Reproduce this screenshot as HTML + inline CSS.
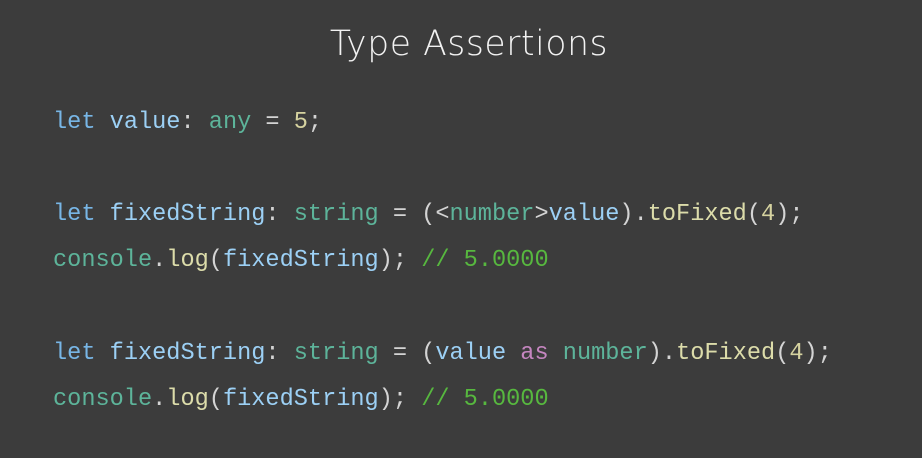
<!DOCTYPE html>
<html><head><style>
body{margin:0;width:922px;height:458px;background:#3c3c3c;overflow:hidden;position:relative}
h1{position:absolute;top:24px;left:0;width:938px;text-align:center;margin:0;font:200 34.5px "DejaVu Sans","Liberation Sans",sans-serif;color:#f2f2f2;letter-spacing:0.6px}
.l{position:absolute;left:53px;font:23.6px "Liberation Mono",monospace;color:#d4d4d4;white-space:pre;line-height:30px}
.k{color:#78b6e6}.v{color:#9cd0f5}.t{color:#5db49a}.n{color:#d6d3a0}.f{color:#dcdcaa}.c{color:#57b83f}.a{color:#c586c0}
</style></head><body>
<h1>Type Assertions</h1>
<div class="l" style="top:108px"><span class="k">let</span> <span class="v">value</span>: <span class="t">any</span> = <span class="n">5</span>;</div>
<div class="l" style="top:200px"><span class="k">let</span> <span class="v">fixedString</span>: <span class="t">string</span> = (&lt;<span class="t">number</span>&gt;<span class="v">value</span>).<span class="f">toFixed</span>(<span class="n">4</span>);</div>
<div class="l" style="top:246px"><span class="t">console</span>.<span class="f">log</span>(<span class="v">fixedString</span>); <span class="c">// 5.0000</span></div>
<div class="l" style="top:339px"><span class="k">let</span> <span class="v">fixedString</span>: <span class="t">string</span> = (<span class="v">value</span> <span class="a">as</span> <span class="t">number</span>).<span class="f">toFixed</span>(<span class="n">4</span>);</div>
<div class="l" style="top:385px"><span class="t">console</span>.<span class="f">log</span>(<span class="v">fixedString</span>); <span class="c">// 5.0000</span></div>
</body></html>
